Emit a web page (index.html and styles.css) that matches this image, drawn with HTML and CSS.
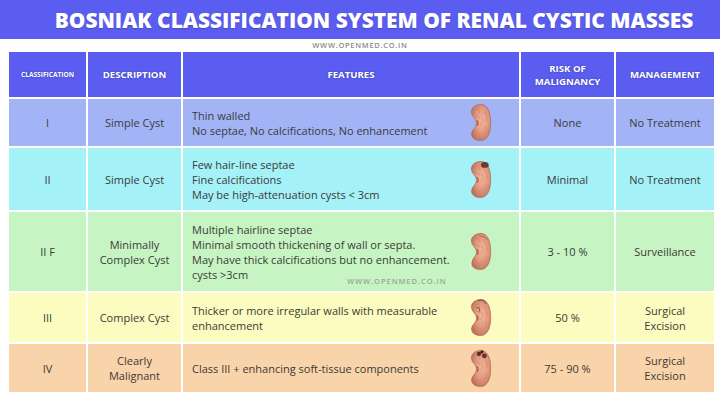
FILE: index.html
```html
<!DOCTYPE html>
<html lang="en">
<head>
<meta charset="utf-8">
<title>Bosniak Classification</title>
<link rel="stylesheet" href="styles.css">
</head>
<body>
<svg width="0" height="0" class="defs">
  <defs>
    <radialGradient id="kg" cx="55%" cy="45%" r="60%">
      <stop offset="0" stop-color="#f2b79c"/>
      <stop offset="0.55" stop-color="#e39a80"/>
      <stop offset="1" stop-color="#bf735e"/>
    </radialGradient>
    <symbol id="kidney" viewBox="0 0 25 40">
      <path d="M14 1.5C20.5 1.5 24 9 24 20C24 31 20.5 38.5 13.5 38.5C7.5 38.5 3.5 35 4.5 30.5C5.3 26.8 9.5 25 9.5 20.5C9.5 16 4.5 14.5 4.2 9.5C4 4.5 8.5 1.5 14 1.5Z" fill="url(#kg)" stroke="#b0674f" stroke-width="0.7"/>
      <path d="M8 7C11 5 14 8 12 11M17 8C19 12 21 15 20 19M14 14C17 16 16 21 13 22M19 24C20 28 18 32 15 34M10 30C12 33 15 32 16 29M7 12C9 14 12 13 13 16" fill="none" stroke="#c77e68" stroke-width="0.7" opacity="0.8"/>
      <path d="M9.5 18C11.5 19 11.5 22 9.8 23" fill="none" stroke="#97503f" stroke-width="1.1"/>
    </symbol>
  </defs>
</svg>

<header class="title-bar">
  <h1 class="title">BOSNIAK CLASSIFICATION SYSTEM OF RENAL CYSTIC MASSES</h1>
</header>
<div class="site">WWW.OPENMED.CO.IN</div>

<div class="table">
  <div class="cell head head-small">CLASSIFICATION</div>
  <div class="cell head">DESCRIPTION</div>
  <div class="cell head">FEATURES</div>
  <div class="cell head">RISK OF<br>MALIGNANCY</div>
  <div class="cell head">MANAGEMENT</div>

  <div class="cell r1">I</div>
  <div class="cell r1">Simple Cyst</div>
  <div class="cell r1 feat">
    <div class="feat-text">Thin walled<br>No septae, No calcifications, No enhancement</div>
    <svg class="kid"><use href="#kidney"/></svg>
  </div>
  <div class="cell r1">None</div>
  <div class="cell r1">No Treatment</div>

  <div class="cell r2">II</div>
  <div class="cell r2">Simple Cyst</div>
  <div class="cell r2 feat">
    <div class="feat-text">Few hair-line septae<br>Fine calcifications<br>May be high-attenuation cysts &lt; 3cm</div>
    <svg class="kid" viewBox="0 0 25 40"><use href="#kidney"/><ellipse cx="18" cy="5" rx="4" ry="3" fill="#4a2420" opacity="0.8"/></svg>
  </div>
  <div class="cell r2">Minimal</div>
  <div class="cell r2">No Treatment</div>

  <div class="cell r3">II F</div>
  <div class="cell r3">Minimally<br>Complex Cyst</div>
  <div class="cell r3 feat">
    <div class="feat-text">Multiple hairline septae<br>Minimal smooth thickening of wall or septa.<br>May have thick calcifications but no enhancement.<br>cysts &gt;3cm</div>
    <svg class="kid" viewBox="0 0 25 40"><use href="#kidney"/><path d="M5 26C3.5 30 3 35 3.5 40" stroke="#f3efd8" stroke-width="1" fill="none"/><path d="M12 3C15 6 19 4 20 8" stroke="#7d4a3c" stroke-width="1" fill="none" opacity="0.6"/></svg>
    <span class="watermark">WWW.OPENMED.CO.IN</span>
  </div>
  <div class="cell r3">3 - 10 %</div>
  <div class="cell r3">Surveillance</div>

  <div class="cell r4">III</div>
  <div class="cell r4">Complex Cyst</div>
  <div class="cell r4 feat">
    <div class="feat-text">Thicker or more irregular walls with measurable<br>enhancement</div>
    <svg class="kid" viewBox="0 0 25 40"><use href="#kidney"/><path d="M11 3C14 1 18 3 19 6M9 10C12 9 14 12 12 14" stroke="#6f4034" stroke-width="1.1" fill="none" opacity="0.7"/></svg>
  </div>
  <div class="cell r4">50 %</div>
  <div class="cell r4">Surgical<br>Excision</div>

  <div class="cell r5">IV</div>
  <div class="cell r5">Clearly<br>Malignant</div>
  <div class="cell r5 feat">
    <div class="feat-text">Class III + enhancing soft-tissue components</div>
    <svg class="kid" viewBox="0 0 25 40"><use href="#kidney"/><circle cx="12" cy="5" r="2.2" fill="#4a1e1a" opacity="0.9"/><circle cx="17.5" cy="7" r="2.5" fill="#5a2420" opacity="0.9"/><circle cx="15" cy="3" r="1.5" fill="#3e1a16"/></svg>
  </div>
  <div class="cell r5">75 - 90 %</div>
  <div class="cell r5">Surgical<br>Excision</div>
</div>
</body>
</html>
```

FILE: styles.css
```css
* { box-sizing: border-box; }

html, body {
  margin: 0;
  padding: 0;
  background: #ffffff;
  width: 720px;
  height: 404px;
  overflow: hidden;
  font-family: "Open Sans", "Liberation Sans", sans-serif;
}

.defs {
  position: absolute;
  width: 0;
  height: 0;
}

.title-bar {
  height: 39px;
  background: #5b5df0;
  display: flex;
  align-items: center;
  justify-content: center;
  padding-left: 28px;
}

.title {
  margin: 0;
  color: #ffffff;
  font-size: 20.9px;
  font-weight: 800;
  letter-spacing: 0;
  white-space: nowrap;
  text-shadow: 0 1px 1px rgba(40, 40, 120, 0.35);
}

.site {
  height: 13px;
  line-height: 13px;
  text-align: center;
  font-size: 7.5px;
  font-weight: 600;
  letter-spacing: 0.7px;
  color: #8a8a8a;
}

.table {
  display: grid;
  grid-template-columns: 77px 93px 336px 93px 98px;
  grid-template-rows: 45px 47px 62px 79px 49px 48px;
  gap: 2px;
  margin-left: 9px;
  width: 705px;
}

.cell {
  display: flex;
  align-items: center;
  justify-content: center;
  text-align: center;
  font-size: 11px;
  line-height: 15px;
  color: #3b3b36;
}

.head {
  background: #5b5df0;
  color: #ffffff;
  font-weight: 700;
  font-size: 9.6px;
  line-height: 13px;
  text-shadow: 0 0 2px rgba(30, 30, 90, 0.5);
}

.head-small {
  font-size: 6.6px;
}

.r1 { background: #a2b4f6; }
.r2 { background: #a4f1f8; }
.r3 { background: #c6f5c3; }
.r4 { background: #fcfbc0; }
.r5 { background: #f9d4ab; }

.feat {
  justify-content: space-between;
  text-align: left;
  padding: 0 27px 0 9px;
  position: relative;
}

.feat-text {
  flex: 1;
}

.kid {
  width: 25px;
  height: 39px;
  flex: none;
}

.watermark {
  position: absolute;
  left: 164px;
  bottom: 5px;
  font-size: 7.5px;
  line-height: 9px;
  font-weight: 600;
  letter-spacing: 0.95px;
  color: #9aa59a;
}
```
